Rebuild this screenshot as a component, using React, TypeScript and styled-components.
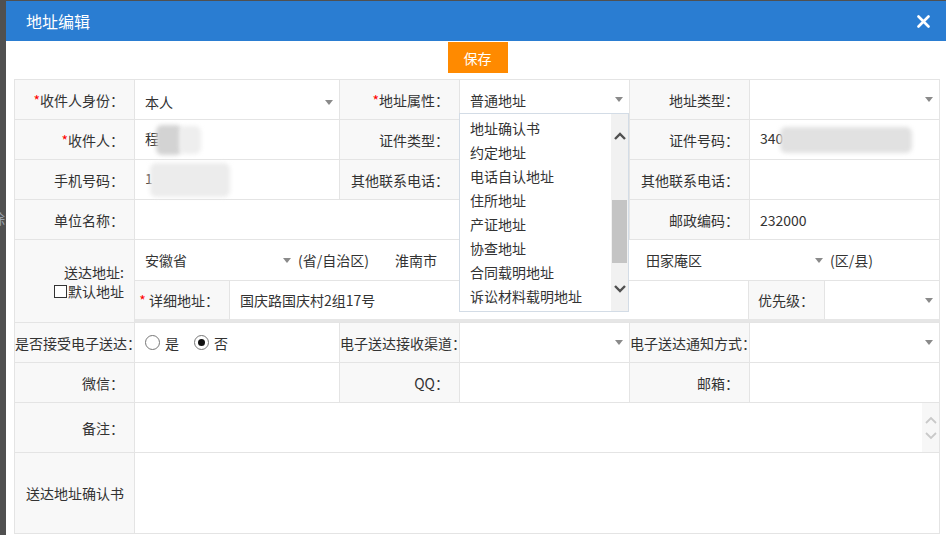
import styled, { createGlobalStyle } from 'styled-components';

const GlobalStyle = createGlobalStyle`
  html, body {
    margin: 0;
    padding: 0;
  }
  body {
    font-family: "Noto Sans CJK SC", "Noto Sans", sans-serif;
    font-size: 14px;
    color: #333;
    background: #505050;
  }
`;

const Screen = styled.div`
  display: flex;
  height: 535px;
  overflow: hidden;
  background: #505050;
`;

const Backdrop = styled.div`
  width: 6px;
  flex: none;
  overflow: hidden;
  padding-top: 208px;
  box-sizing: border-box;
  color: #9aa4b0;
  span {
    display: block;
    margin-left: -9px;
    font-size: 14px;
  }
`;

const Dialog = styled.div`
  flex: 1;
  margin-top: 1px;
  background: #fff;
  display: flex;
  flex-direction: column;
  overflow: hidden;
`;

const Header = styled.div`
  height: 40px;
  flex: none;
  background: #2a7dd2;
  display: flex;
  align-items: center;
  justify-content: space-between;
  padding: 0 15px 0 20px;
  color: #fff;
  font-size: 16px;
`;

const CloseButton = styled.button`
  border: 0;
  background: none;
  padding: 0;
  width: 16px;
  height: 16px;
  display: flex;
  align-items: center;
  justify-content: center;
  cursor: pointer;
`;

const Body = styled.div`
  padding: 1px 7px 0 8px;
`;

const Toolbar = styled.div`
  display: flex;
  justify-content: center;
  margin-bottom: 6px;
  padding-left: 2px;
`;

const SaveButton = styled.button`
  width: 60px;
  height: 31px;
  border: 0;
  background: #ff8a00;
  color: #fff;
  font-family: inherit;
  font-size: 14px;
  padding: 0;
`;

const Form = styled.table`
  width: 925px;
  table-layout: fixed;
  border-collapse: collapse;
  td {
    border: 1px solid #e4e4e4;
  }
`;

const Row = styled.tr<{ $h?: number }>`
  height: ${p => p.$h ?? 40}px;
`;

const Label = styled.td`
  background: #f8f8f8;
  text-align: right;
  padding: 0 10px 0 0;
  white-space: nowrap;
  overflow: visible;
  color: #333;
`;

const Value = styled.td<{ $flush?: boolean }>`
  padding: ${p => (p.$flush ? '0' : '0 6px 0 10px')};
  white-space: nowrap;
  vertical-align: middle;
  position: relative;
`;

const Req = styled.span`
  color: #f00;
`;

const SelectBox = styled.div<{ $low?: boolean }>`
  display: flex;
  align-items: center;
  justify-content: space-between;
  padding-top: ${p => (p.$low ? '5px' : '0')};
`;

const Caret = styled.span`
  width: 0;
  height: 0;
  border-left: 4px solid transparent;
  border-right: 4px solid transparent;
  border-top: 5px solid #8a8a8a;
  flex: none;
`;

const Blur = styled.span<{ $w: number; $h: number; $tone: string }>`
  display: inline-block;
  vertical-align: middle;
  width: ${p => p.$w}px;
  height: ${p => p.$h}px;
  background: ${p => p.$tone};
  filter: blur(2px);
  border-radius: 6px;
  margin-left: -3px;
`;

const Dropdown = styled.div`
  position: absolute;
  top: 33px;
  left: -1px;
  width: 170px;
  height: 199px;
  box-sizing: border-box;
  border: 1px solid #d3dce6;
  background: #fff;
  display: flex;
  z-index: 5;
`;

const OptionList = styled.div`
  flex: 1;
  padding-top: 2px;
  overflow: hidden;
`;

const Option = styled.div`
  line-height: 24px;
  padding-left: 10px;
  color: #333;
`;

const ScrollBar = styled.div`
  width: 17px;
  background: #f1f1f1;
  display: flex;
  flex-direction: column;
`;

const ScrollButton = styled.div`
  height: 44px;
  display: flex;
  align-items: center;
  justify-content: center;
`;

const ScrollTrack = styled.div`
  flex: 1;
  padding-top: 42px;
`;

const Thumb = styled.div`
  height: 63px;
  background: #c4c4c4;
  margin: 0 1px;
`;

const AddrLabel = styled.div`
  display: flex;
  flex-direction: column;
  align-items: flex-end;
  line-height: 19px;
  padding-top: 2px;
`;

const DefaultCheck = styled.label`
  display: flex;
  align-items: center;
`;

const CheckBox = styled.span`
  width: 11px;
  height: 11px;
  border: 1px solid #333;
  background: #fff;
  margin-right: 1px;
`;

const AddrStack = styled.div`
  display: flex;
  flex-direction: column;
`;

const RegionRow = styled.div`
  height: 40px;
  display: flex;
  align-items: center;
  border-bottom: 1px solid #e4e4e4;
`;

const Segment = styled.div<{ $w?: number }>`
  display: flex;
  align-items: center;
  ${p => (p.$w ? `width: ${p.$w}px;` : 'flex: 1;')}
  flex-shrink: 0;
`;

const RegionSelect = styled.div<{ $w: number }>`
  width: ${p => p.$w}px;
  box-sizing: border-box;
  padding: 0 4px 0 10px;
  display: flex;
  align-items: center;
  justify-content: space-between;
`;

const Unit = styled.span`
  margin-left: 3px;
`;

const DetailRow = styled.div`
  height: 38px;
  display: grid;
  grid-template-columns: 95px 519px 76px 1fr;
  border-bottom: 3px solid #e6e6e6;
`;

const SubLabel = styled.div`
  background: #f8f8f8;
  display: flex;
  align-items: center;
  justify-content: flex-end;
  padding-right: 10px;
  border-right: 1px solid #e4e4e4;
`;

const SubValue = styled.div<{ $divided?: boolean }>`
  display: flex;
  align-items: center;
  justify-content: space-between;
  padding: 0 6px 0 10px;
  ${p => (p.$divided ? 'border-right: 1px solid #e4e4e4;' : '')}
`;

const Radios = styled.div`
  display: flex;
  align-items: center;
`;

const Radio = styled.span<{ $checked?: boolean }>`
  width: 13px;
  height: 13px;
  border: 1px solid #777;
  border-radius: 50%;
  background: #fff;
  display: flex;
  align-items: center;
  justify-content: center;
  margin-right: 5px;
  &::after {
    content: '';
    width: 7px;
    height: 7px;
    border-radius: 50%;
    background: ${p => (p.$checked ? '#111' : 'transparent')};
  }
`;

const RadioText = styled.span`
  margin-right: 15px;
`;

const NoteBox = styled.div`
  display: flex;
  height: 49px;
`;

const Spinner = styled.div`
  width: 17px;
  margin-left: auto;
  background: #f7f7f7;
  display: flex;
  flex-direction: column;
  justify-content: center;
  gap: 8px;
  align-items: center;
`;

const Chevron = ({ up, color, width = 2 }: { up?: boolean; color: string; width?: number }) => (
  <svg width="12" height="8" viewBox="0 0 12 8">
    <polyline
      points={up ? '1,7 6,2 11,7' : '1,1 6,6 11,1'}
      fill="none"
      stroke={color}
      strokeWidth={width}
    />
  </svg>
);

const options = ['地址确认书', '约定地址', '电话自认地址', '住所地址', '产证地址', '协查地址', '合同载明地址', '诉讼材料载明地址'];

export default function App() {
  return (
    <>
      <GlobalStyle />
      <Screen>
        <Backdrop>
          <span>除</span>
        </Backdrop>
        <Dialog>
          <Header>
            <span>地址编辑</span>
            <CloseButton>
              <svg width="13" height="13" viewBox="0 0 13 13">
                <path d="M1.5 1.5 L11.5 11.5 M11.5 1.5 L1.5 11.5" stroke="#fff" strokeWidth="2.6" strokeLinecap="round" />
              </svg>
            </CloseButton>
          </Header>
          <Body>
            <Toolbar>
              <SaveButton>保存</SaveButton>
            </Toolbar>
            <Form>
              <colgroup>
                <col style={{ width: 120 }} />
                <col style={{ width: 205 }} />
                <col style={{ width: 120 }} />
                <col style={{ width: 170 }} />
                <col style={{ width: 120 }} />
                <col style={{ width: 190 }} />
              </colgroup>
              <tbody>
                <Row>
                  <Label><Req>*</Req>收件人身份：</Label>
                  <Value>
                    <SelectBox $low>
                      <span>本人</span>
                      <Caret />
                    </SelectBox>
                  </Value>
                  <Label><Req>*</Req>地址属性：</Label>
                  <Value>
                    <SelectBox>
                      <span>普通地址</span>
                      <Caret />
                    </SelectBox>
                    <Dropdown>
                      <OptionList>
                        {options.map(o => (
                          <Option key={o}>{o}</Option>
                        ))}
                      </OptionList>
                      <ScrollBar>
                        <ScrollButton>
                          <Chevron up color="#505050" width={2.4} />
                        </ScrollButton>
                        <ScrollTrack>
                          <Thumb />
                        </ScrollTrack>
                        <ScrollButton>
                          <Chevron color="#505050" width={2.4} />
                        </ScrollButton>
                      </ScrollBar>
                    </Dropdown>
                  </Value>
                  <Label>地址类型：</Label>
                  <Value>
                    <SelectBox>
                      <span />
                      <Caret />
                    </SelectBox>
                  </Value>
                </Row>
                <Row>
                  <Label><Req>*</Req>收件人：</Label>
                  <Value>
                    <span>程</span>
                    <Blur $w={26} $h={30} $tone="#d3d3d3" />
                    <Blur $w={22} $h={28} $tone="#eeeeee" />
                  </Value>
                  <Label>证件类型：</Label>
                  <Value />
                  <Label>证件号码：</Label>
                  <Value>
                    <span>340</span>
                    <Blur $w={132} $h={26} $tone="#e1e1e1" />
                  </Value>
                </Row>
                <Row>
                  <Label>手机号码：</Label>
                  <Value>
                    <span>1</span>
                    <Blur $w={80} $h={34} $tone="#ececec" />
                  </Value>
                  <Label>其他联系电话：</Label>
                  <Value />
                  <Label>其他联系电话：</Label>
                  <Value />
                </Row>
                <Row>
                  <Label>单位名称：</Label>
                  <Value colSpan={3} />
                  <Label>邮政编码：</Label>
                  <Value>232000</Value>
                </Row>
                <Row>
                  <Label>
                    <AddrLabel>
                      <span>送达地址:</span>
                      <DefaultCheck>
                        <CheckBox />
                        默认地址
                      </DefaultCheck>
                    </AddrLabel>
                  </Label>
                  <Value colSpan={5} $flush>
                    <AddrStack>
                      <RegionRow>
                        <Segment $w={250}>
                          <RegionSelect $w={160}>
                            <span>安徽省</span>
                            <Caret />
                          </RegionSelect>
                          <Unit>(省/自治区)</Unit>
                        </Segment>
                        <Segment $w={251}>
                          <RegionSelect $w={160}>
                            <span>淮南市</span>
                            <Caret />
                          </RegionSelect>
                          <Unit>(市)</Unit>
                        </Segment>
                        <Segment>
                          <RegionSelect $w={191}>
                            <span>田家庵区</span>
                            <Caret />
                          </RegionSelect>
                          <Unit>(区/县)</Unit>
                        </Segment>
                      </RegionRow>
                      <DetailRow>
                        <SubLabel>
                          <span><Req>*</Req> 详细地址：</span>
                        </SubLabel>
                        <SubValue $divided>国庆路国庆村2组17号</SubValue>
                        <SubLabel>优先级：</SubLabel>
                        <SubValue>
                          <span />
                          <Caret />
                        </SubValue>
                      </DetailRow>
                    </AddrStack>
                  </Value>
                </Row>
                <Row>
                  <Label>是否接受电子送达：</Label>
                  <Value>
                    <Radios>
                      <Radio />
                      <RadioText>是</RadioText>
                      <Radio $checked />
                      <RadioText>否</RadioText>
                    </Radios>
                  </Value>
                  <Label>电子送达接收渠道：</Label>
                  <Value>
                    <SelectBox>
                      <span />
                      <Caret />
                    </SelectBox>
                  </Value>
                  <Label>电子送达通知方式：</Label>
                  <Value>
                    <SelectBox>
                      <span />
                      <Caret />
                    </SelectBox>
                  </Value>
                </Row>
                <Row>
                  <Label>微信：</Label>
                  <Value />
                  <Label>QQ：</Label>
                  <Value />
                  <Label>邮箱：</Label>
                  <Value />
                </Row>
                <Row $h={50}>
                  <Label>备注：</Label>
                  <Value colSpan={5} $flush>
                    <NoteBox>
                      <Spinner>
                        <Chevron up color="#c9c9c9" width={1.8} />
                        <Chevron color="#c9c9c9" width={1.8} />
                      </Spinner>
                    </NoteBox>
                  </Value>
                </Row>
                <Row $h={81}>
                  <Label>送达地址确认书</Label>
                  <Value colSpan={5} />
                </Row>
              </tbody>
            </Form>
          </Body>
        </Dialog>
      </Screen>
    </>
  );
}
